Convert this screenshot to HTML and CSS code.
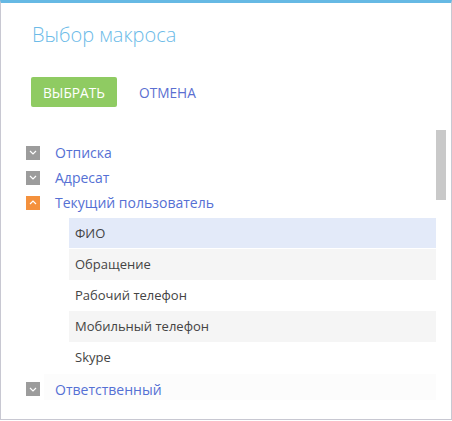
FILE: index.html
```html
<!DOCTYPE html>
<html lang="ru">
<head>
<meta charset="utf-8">
<link rel="stylesheet" href="styles.css">
</head>
<body>
<div class="window">
  <h1 class="title">Выбор макроса</h1>
  <div class="actions">
    <button class="btn btn-primary">ВЫБРАТЬ</button>
    <button class="btn btn-link">ОТМЕНА</button>
  </div>
  <div class="scroll">
    <div class="thumb"></div>
    <ul class="tree">
      <li class="node">
        <span class="toggle"><svg width="8" height="5" viewBox="0 0 8 5"><path d="M1 1l3 3 3-3" fill="none" stroke="#fff" stroke-width="1.2"/></svg></span>
        <span class="label">Отписка</span>
      </li>
      <li class="node">
        <span class="toggle"><svg width="8" height="5" viewBox="0 0 8 5"><path d="M1 1l3 3 3-3" fill="none" stroke="#fff" stroke-width="1.2"/></svg></span>
        <span class="label">Адресат</span>
      </li>
      <li class="node">
        <span class="toggle open"><svg width="8" height="5" viewBox="0 0 8 5"><path d="M1 4l3-3 3 3" fill="none" stroke="#fff" stroke-width="1.2"/></svg></span>
        <span class="label">Текущий пользователь</span>
      </li>
    </ul>
    <ul class="sublist">
      <li class="item selected">ФИО</li>
      <li class="item alt">Обращение</li>
      <li class="item">Рабочий телефон</li>
      <li class="item alt">Мобильный телефон</li>
      <li class="item">Skype</li>
    </ul>
    <ul class="tree">
      <li class="node last">
        <span class="toggle"><svg width="8" height="5" viewBox="0 0 8 5"><path d="M1 1l3 3 3-3" fill="none" stroke="#fff" stroke-width="1.2"/></svg></span>
        <span class="label">Ответственный</span>
      </li>
    </ul>
  </div>
</div>
</body>
</html>
```
FILE: styles.css
```css
* { box-sizing: border-box; }
html, body { margin: 0; padding: 0; background: #fff; }
body { width: 452px; height: 421px; font-family: "Open Sans", "Liberation Sans", sans-serif; }

.window {
  width: 452px;
  height: 420px;
  border-top: 3px solid #66b9e4;
  border-left: 1px solid #c8c8d2;
  border-right: 1px solid #c8c8d2;
  border-bottom: 1px solid #c8c8d2;
  display: flex;
  flex-direction: column;
}

.title {
  margin: 18px 0 0 31px;
  font-size: 20px;
  line-height: 28px;
  font-weight: 300;
  color: #6cbbe8;
}

.actions {
  display: flex;
  align-items: center;
  margin: 28px 0 0 30px;
  gap: 22px;
}

.btn {
  font-family: "Open Sans", "Liberation Sans", sans-serif;
  font-size: 13.7px;
  border: 0;
  padding: 0;
  height: 30px;
  background: none;
}
.btn-primary {
  width: 86px;
  background: #8fcb62;
  color: #fff;
  border-radius: 2px;
}
.btn-link {
  color: #5b6fd1;
}

.scroll {
  position: relative;
  margin-top: 23px;
  height: 270px;
  overflow: hidden;
  padding-top: 10px;
}
.thumb {
  position: absolute;
  left: 435px;
  top: 0;
  width: 10px;
  height: 70px;
  background: #c9c9c9;
}

.tree, .sublist { list-style: none; margin: 0; padding: 0; }

.node {
  display: flex;
  align-items: center;
  height: 25px;
  padding-left: 25px;
  width: 435px;
}
.node.last {
  margin-top: 1px;
  height: 30px;
  background: linear-gradient(#fcfcfc, #fcfcfc) no-repeat 43px 0 / calc(100% - 43px) 27px;
}
.toggle {
  width: 14px;
  height: 14px;
  background: #9c9c9c;
  display: flex;
  align-items: center;
  justify-content: center;
  flex: none;
}
.toggle.open { background: #f4913d; }
.label {
  margin-left: 15px;
  font-size: 14px;
  color: #5570d4;
}

.sublist {
  margin: 3px 0 0 68px;
  width: 367px;
}
.item {
  height: 31px;
  line-height: 30px;
  padding-left: 6px;
  font-size: 13px;
  color: #444;
  border-bottom: 1px solid #fff;
}
.item.selected { background: #e3eaf9; }
.item.alt { background: #f5f5f5; border-bottom-color: #f5f5f5; }
```
